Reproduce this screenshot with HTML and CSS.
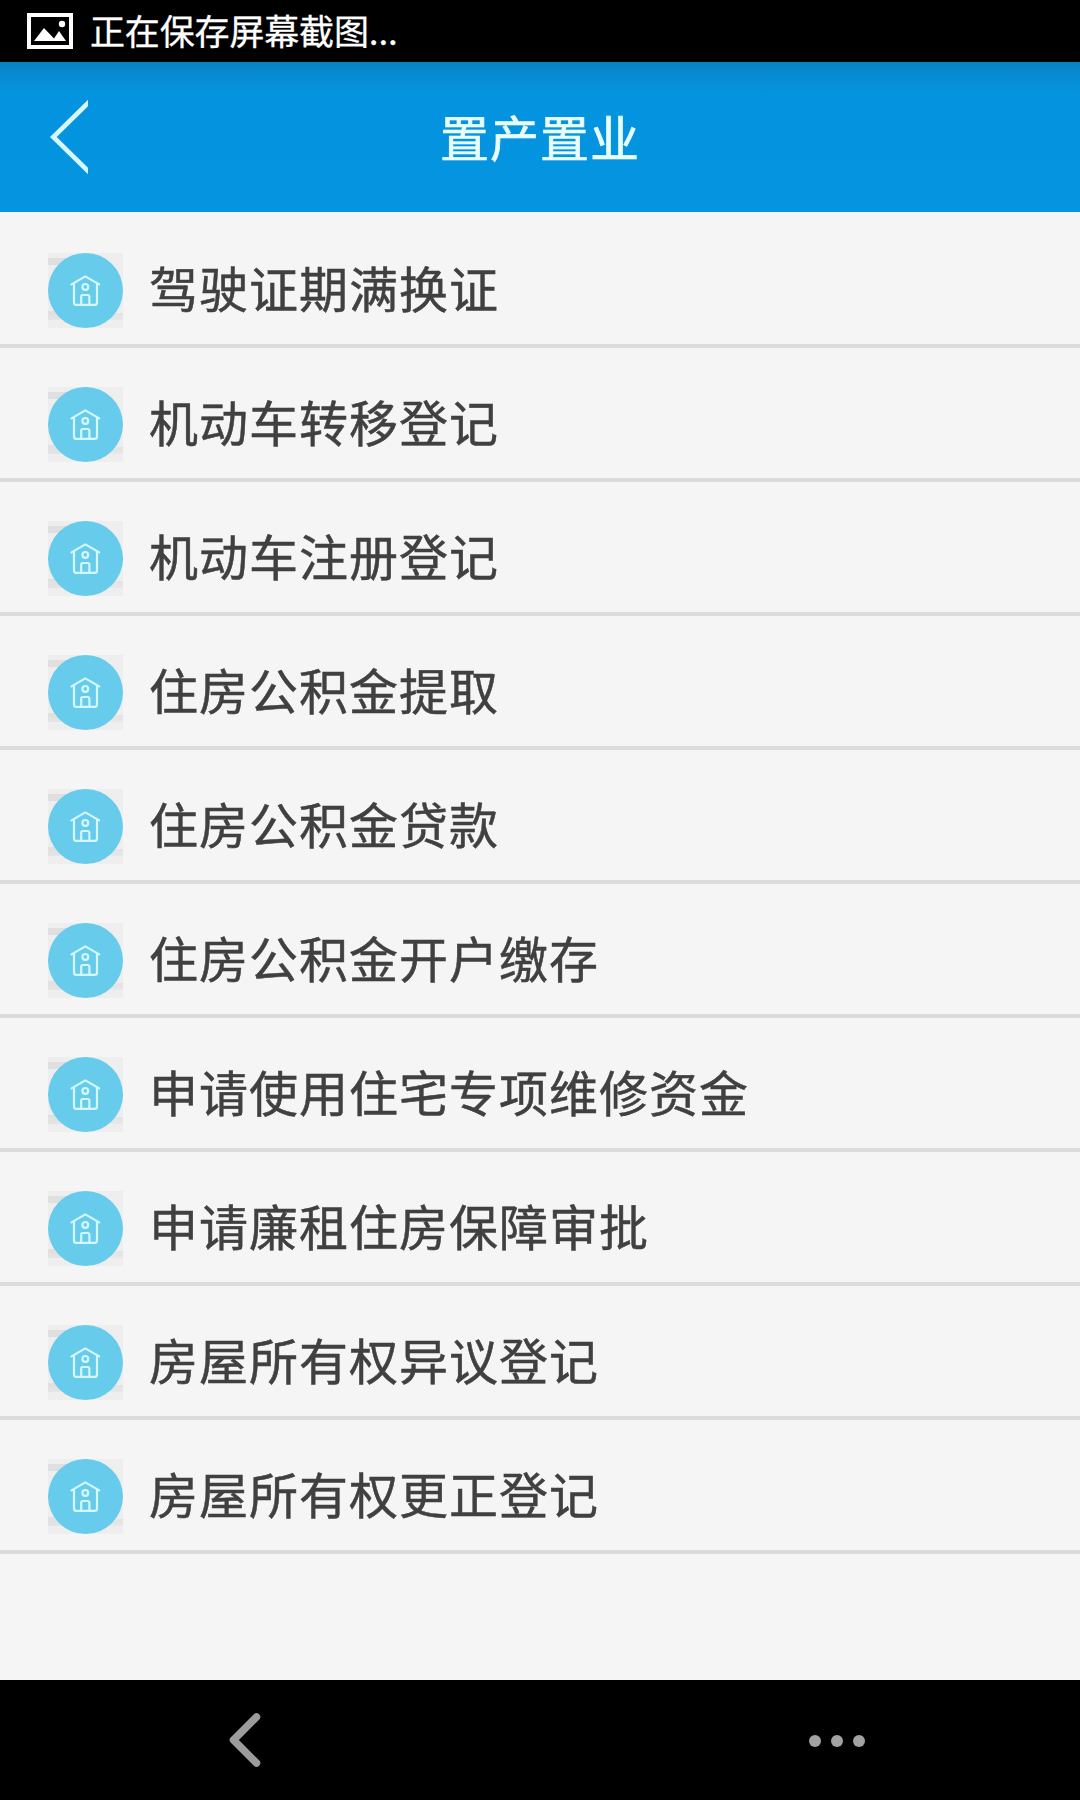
FILE: index.html
```html
<!DOCTYPE html>
<html lang="zh-CN">
<head>
<meta charset="utf-8">
<title>置产置业</title>
<link rel="stylesheet" href="styles.css">
</head>
<body>
<svg class="defs" aria-hidden="true">
  <symbol id="house" viewBox="0 0 75 75">
    <circle cx="37.5" cy="37.5" r="37.5" fill="#67cbec"/>
    <g fill="none" stroke="#d4f8ff" stroke-width="2.2" stroke-linecap="round" stroke-linejoin="round">
      <path d="M23.5 31.4 37.3 23.4 51.2 31.4"/>
      <path d="M26 30.500V49.400a2.400 2.400 0 0 0 2.400 2.400H46.600a2.400 2.400 0 0 0 2.400-2.400V30.500"/>
      <circle cx="37.300" cy="33.900" r="2.900"/>
      <path d="M33.200 51.500V43.600a1.600 1.600 0 0 1 1.600-1.600H39.800a1.600 1.600 0 0 1 1.600 1.600V51.500"/>
    </g>
  </symbol>
</svg>
<div class="screen">
  <div class="status">
    <svg class="picture" viewBox="0 0 46 36"><path d="M2 2H44V34H2Z" fill="none" stroke="#fff" stroke-width="4"/><path d="M7 28 17 15 27 25.5 32 18 39 28Z" fill="#fff"/><circle cx="35" cy="11" r="3.2" fill="#fff"/></svg>
    <span class="status-text">正在保存屏幕截图...</span>
  </div>
  <header class="header">
    <svg class="back" viewBox="0 0 40 78"><path d="M42 3 5.300 39 42 75" fill="none" stroke="#d8f8ff" stroke-width="4.600"/></svg>
    <h1 class="title">置产置业</h1>
  </header>
  <ul class="list">
    <li class="row"><span class="badge"><svg><use href="#house"/></svg></span><span class="label">驾驶证期满换证</span></li>
    <li class="row"><span class="badge"><svg><use href="#house"/></svg></span><span class="label">机动车转移登记</span></li>
    <li class="row"><span class="badge"><svg><use href="#house"/></svg></span><span class="label">机动车注册登记</span></li>
    <li class="row"><span class="badge"><svg><use href="#house"/></svg></span><span class="label">住房公积金提取</span></li>
    <li class="row"><span class="badge"><svg><use href="#house"/></svg></span><span class="label">住房公积金贷款</span></li>
    <li class="row"><span class="badge"><svg><use href="#house"/></svg></span><span class="label">住房公积金开户缴存</span></li>
    <li class="row"><span class="badge"><svg><use href="#house"/></svg></span><span class="label">申请使用住宅专项维修资金</span></li>
    <li class="row"><span class="badge"><svg><use href="#house"/></svg></span><span class="label">申请廉租住房保障审批</span></li>
    <li class="row"><span class="badge"><svg><use href="#house"/></svg></span><span class="label">房屋所有权异议登记</span></li>
    <li class="row"><span class="badge"><svg><use href="#house"/></svg></span><span class="label">房屋所有权更正登记</span></li>
  </ul>
  <nav class="nav">
    <svg class="nav-back" viewBox="0 0 32 56"><path d="M27.500 5 4.500 28 27.500 51" fill="none" stroke="#9b9b9b" stroke-width="7.500" stroke-linecap="round" stroke-linejoin="round"/></svg>
    <svg class="nav-more" viewBox="0 0 56 12" fill="#a2a2a2"><circle cx="6" cy="6" r="6"/><circle cx="28" cy="6" r="6"/><circle cx="50" cy="6" r="6"/></svg>
  </nav>
</div>
</body>
</html>
```
FILE: styles.css
```css
* { box-sizing: border-box; }
body {
  margin: 0;
  background: #000;
  font-family: "Noto Sans CJK SC", sans-serif;
}
svg { display: block; flex: none; }
.defs { display: none; }
.screen {
  width: 1080px;
  height: 1800px;
  display: flex;
  flex-direction: column;
  overflow: hidden;
}
.status {
  height: 62px;
  flex: none;
  display: flex;
  align-items: center;
  gap: 17px;
  padding-left: 27px;
  background: #000;
  color: #fff;
}
.picture { width: 46px; height: 36px; }
.status-text {
  font-size: 35px;
  line-height: 60px;
  height: 62px;
  letter-spacing: -0.15px;
  -webkit-text-stroke: 0.3px #fff;
}
.header {
  height: 150px;
  flex: none;
  display: grid;
  grid-template-columns: 88px 1fr 88px;
  background: linear-gradient(#0882bf 0, #078bd0 12px, #0494df 32px, #0595e0 100%);
}
.back { width: 40px; height: 78px; margin: 36px 0 0 48px; }
.title {
  margin: 0;
  font-size: 49px;
  font-weight: 400;
  letter-spacing: 1px;
  line-height: 148px;
  text-align: center;
  color: #e9fcff;
  -webkit-text-stroke: 0.7px #e9fcff;
}
.list {
  flex: 1;
  margin: 0;
  padding: 2px 0 0;
  list-style: none;
  background: #f5f5f5;
}
.row {
  height: 134px;
  display: flex;
  align-items: flex-start;
  gap: 26px;
  padding: 39px 48px 0;
  border-bottom: 4px solid #dcdcdc;
}
.badge {
  width: 75px;
  height: 75px;
  flex: none;
  background:
    linear-gradient(transparent 60px, #e3e3e3 60px, #e8e8e8 67px, transparent 67px) right / 50% 100% no-repeat,
    linear-gradient(transparent 5px, #dfdfdf 5px, #dfdfdf 12px, transparent 12px, transparent 58px, #dfdfdf 58px, #e4e4e4 67px, transparent 67px) left / 50% 100% no-repeat,
    #eeeeee;
}
.badge svg { width: 75px; height: 75px; }
.label {
  font-size: 49px;
  letter-spacing: 1px;
  line-height: 68px;
  color: #404040;
  -webkit-text-stroke: 0.5px #404040;
  white-space: nowrap;
}
.nav {
  height: 120px;
  flex: none;
  display: flex;
  align-items: center;
  justify-content: space-between;
  padding: 0 215px 0 229px;
  background: #000;
}
.nav-back { width: 32px; height: 56px; }
.nav-more { width: 56px; height: 12px; margin-top: 2px; }
```
